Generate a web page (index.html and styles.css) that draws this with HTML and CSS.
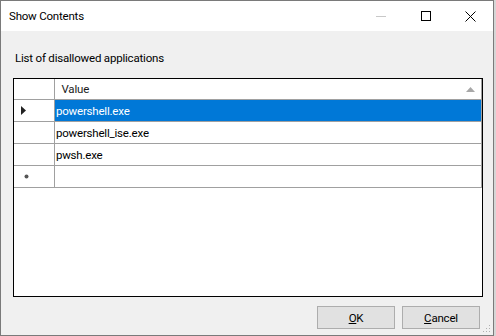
FILE: index.html
```html
<!DOCTYPE html>
<html lang="en">
  <head>
    <meta charset="UTF-8" />
    <title>Show Contents</title>
    <link rel="stylesheet" href="styles.css">
  </head>
  <body>
    <div class="window">
      <div class="titlebar">
        <div class="title">Show Contents</div>
        <div class="controls">
          <div class="ctrl">
            <svg width="10" height="10" viewBox="0 0 10 10"><path d="M0 5.5h10" stroke="#c8c8c8" stroke-width="1"/></svg>
          </div>
          <div class="ctrl">
            <svg width="10" height="10" viewBox="0 0 10 10"><rect x="0.5" y="0.5" width="9" height="9" fill="none" stroke="#000" stroke-width="1"/></svg>
          </div>
          <div class="ctrl">
            <svg width="11" height="11" viewBox="0 0 11 11"><path d="M0.5 0.5l10 10M10.5 0.5l-10 10" stroke="#000" stroke-width="1"/></svg>
          </div>
        </div>
      </div>
      <div class="content">
        <div class="label">List of disallowed applications</div>
        <div class="grid">
          <div class="row header">
            <div class="rowhead"></div>
            <div class="cell">Value
              <svg class="sort" width="9" height="5" viewBox="0 0 9 5"><path d="M0 5L4.5 0L9 5Z" fill="#a8a8a8"/></svg>
            </div>
          </div>
          <div class="row selected">
            <div class="rowhead">
              <svg width="5" height="9" viewBox="0 0 5 9"><path d="M0 0L5 4.5L0 9Z" fill="#222"/></svg>
            </div>
            <div class="cell">powershell.exe</div>
          </div>
          <div class="row">
            <div class="rowhead"></div>
            <div class="cell">powershell_ise.exe</div>
          </div>
          <div class="row">
            <div class="rowhead"></div>
            <div class="cell">pwsh.exe</div>
          </div>
          <div class="row">
            <div class="rowhead newrow">
              <svg width="5" height="5" viewBox="0 0 5 5"><circle cx="2.5" cy="2.5" r="2" fill="#555"/></svg>
            </div>
            <div class="cell"></div>
          </div>
        </div>
        <div class="buttons">
          <button class="btn"><u>O</u>K</button>
          <button class="btn"><u>C</u>ancel</button>
        </div>
      </div>
      <svg class="grip" width="8" height="8" viewBox="0 0 8 8">
        <rect x="6" y="0" width="1" height="1" fill="#b0b0b0"/>
        <rect x="3" y="3" width="1" height="1" fill="#b0b0b0"/>
        <rect x="6" y="3" width="1" height="1" fill="#b0b0b0"/>
        <rect x="0" y="6" width="1" height="1" fill="#b0b0b0"/>
        <rect x="3" y="6" width="1" height="1" fill="#b0b0b0"/>
        <rect x="6" y="6" width="1" height="1" fill="#b0b0b0"/>
      </svg>
    </div>
  </body>
</html>
```

FILE: styles.css
```css
body {
  margin: 0;
  padding: 0;
  background: #d6d6d6;
  font-family: Roboto, "Liberation Sans", sans-serif;
  font-size: 11.5px;
  letter-spacing: -0.2px;
  color: #000;
}
.window {
  width: 492px;
  height: 334px;
  border: 1px solid #7a7a7a;
  background: #f0f0f0;
  display: flex;
  flex-direction: column;
  position: relative;
}
.titlebar {
  height: 30px;
  background: #fff;
  display: flex;
  align-items: center;
  justify-content: space-between;
}
.title {
  padding-left: 8px;
}
.controls {
  display: flex;
  height: 100%;
}
.ctrl {
  width: 45px;
  height: 100%;
  display: flex;
  align-items: center;
  justify-content: center;
}
.content {
  flex: 1;
  display: flex;
  flex-direction: column;
  padding: 20px 10px 0 12px;
}
.label {
  padding-left: 2px;
  line-height: 15px;
}
.grid {
  margin-top: 12px;
  height: 217px;
  border: 1px solid #000;
  background: #fff;
}
.row {
  display: flex;
  height: 21px;
  border-bottom: 1px solid #a0a0a0;
}
.row.header {
  height: 20px;
}
.rowhead {
  width: 41px;
  border-right: 1px solid #a0a0a0;
  display: flex;
  align-items: center;
  padding-left: 7px;
  box-sizing: border-box;
}
.rowhead.newrow {
  padding-left: 10px;
}
.cell {
  width: 426px;
  border-right: 1px solid #a0a0a0;
  display: flex;
  align-items: center;
  padding-left: 1px;
  position: relative;
}
.header .cell {
  padding-left: 7px;
  color: #1a1a1a;
}
.sort {
  position: absolute;
  right: 6px;
  top: 8px;
}
.selected .cell {
  background: #0078d7;
  color: #fff;
}
.buttons {
  display: flex;
  justify-content: flex-end;
  gap: 7px;
  margin-top: 9px;
  padding-right: 3px;
}
.btn {
  width: 78px;
  height: 23px;
  border: 1px solid #adadad;
  background: #e1e1e1;
  font-family: inherit;
  font-size: inherit;
  letter-spacing: inherit;
  color: #000;
  padding: 0;
}
.grip {
  position: absolute;
  right: 2px;
  bottom: 2px;
}
```
